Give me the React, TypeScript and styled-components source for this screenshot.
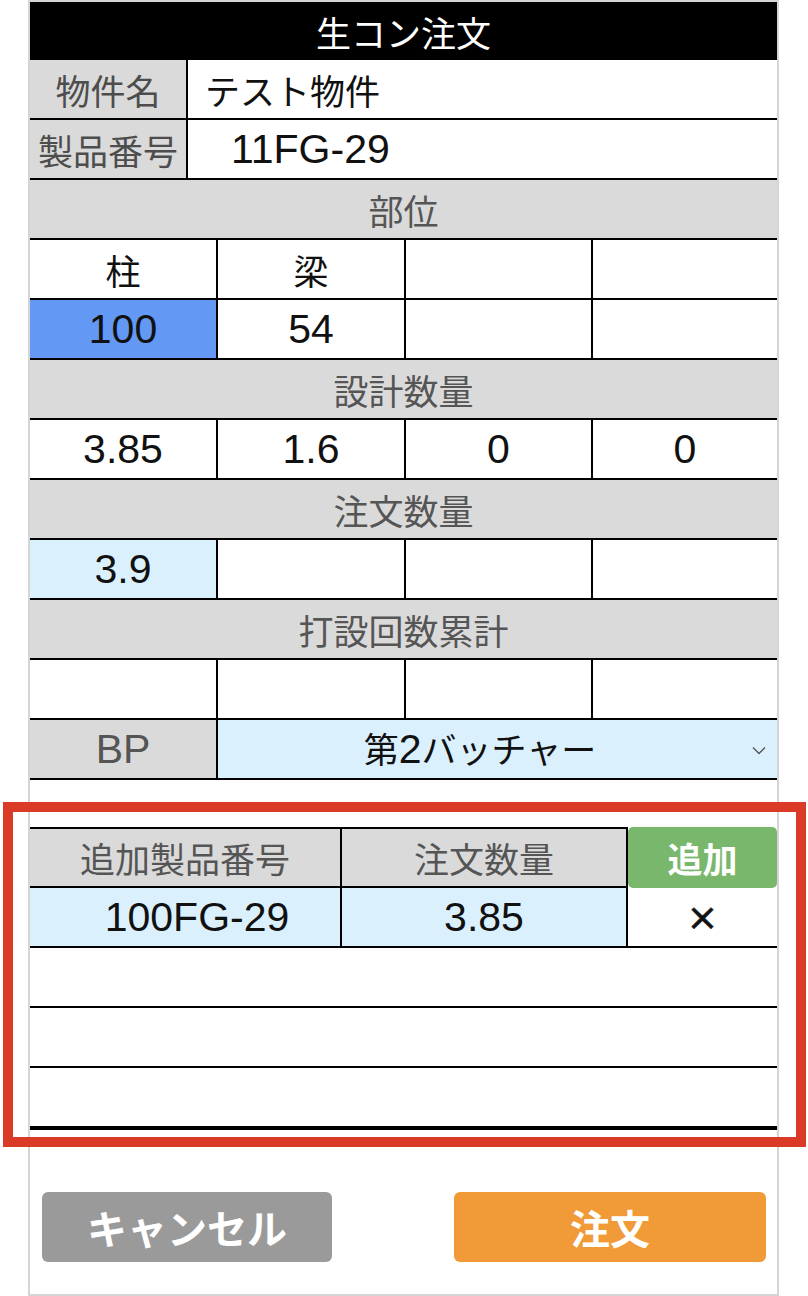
import React from "react";
import styled, { createGlobalStyle } from "styled-components";

const GlobalStyle = createGlobalStyle`
  html, body { margin: 0; padding: 0; background: #fff; }
  body { font-family: "Noto Sans CJK JP", "Noto Sans", sans-serif; }
  * { box-sizing: border-box; }
`;

type Tone = "white" | "blue" | "light" | "gray";
const toneBg: Record<Tone, string> = {
  white: "#ffffff",
  blue: "#6398f5",
  light: "#dbf0fd",
  gray: "#dadada",
};

const latinFont = `"Liberation Sans", "Noto Sans CJK JP", sans-serif`;

const Sheet = styled.div`
  position: relative;
  width: 751px;
  margin-left: 28px;
  border: 2px solid #d5d5d5;
  background: #fff;
  font-size: 35px;
  line-height: 1;
  color: #111;
`;

const Latin = styled.span`
  font-family: ${latinFont};
  font-size: 41px;
`;

const TitleBar = styled.div`
  height: 58px;
  background: #000;
  color: #fff;
  display: flex;
  align-items: center;
  justify-content: center;
`;

const FieldRow = styled.div`
  display: grid;
  grid-template-columns: 156px 1fr;
  column-gap: 2px;
  background: #000;
  border-bottom: 2px solid #000;
  height: 60px;
`;

const FieldLabel = styled.div`
  background: #dadada;
  color: #4d4d4d;
  display: flex;
  align-items: center;
  justify-content: center;
`;

const FieldValue = styled.div<{ $indent: number }>`
  background: #fff;
  display: flex;
  align-items: center;
  padding-left: ${(p) => p.$indent}px;
`;

const SectionHeader = styled.div`
  height: 60px;
  background: #dadada;
  color: #555;
  border-bottom: 2px solid #000;
  display: flex;
  align-items: center;
  justify-content: center;
`;

const QuadRow = styled.div`
  display: grid;
  grid-template-columns: 186px 186px 185px 1fr;
  column-gap: 2px;
  background: #000;
  border-bottom: 2px solid #000;
  height: 60px;
`;

const Cell = styled.div<{ $tone?: Tone; $muted?: boolean; $num?: boolean }>`
  background: ${(p) => toneBg[p.$tone ?? "white"]};
  color: ${(p) => (p.$muted ? "#555" : "#111")};
  font-family: ${(p) => (p.$num ? latinFont : "inherit")};
  font-size: ${(p) => (p.$num ? "41px" : "inherit")};
  display: flex;
  align-items: center;
  justify-content: center;
`;

const BpRow = styled.div`
  display: grid;
  grid-template-columns: 186px 1fr;
  column-gap: 2px;
  background: #000;
  border-bottom: 2px solid #000;
  height: 60px;
`;

const SelectBox = styled.div`
  background: #dbf0fd;
  display: flex;
  align-items: center;
  position: relative;
  padding-right: 35px;
`;

const SelectText = styled.span`
  flex: 1;
  text-align: center;
`;

const Chevron = styled.svg`
  position: absolute;
  right: 11px;
  top: 26px;
`;

const AddSection = styled.div`
  position: relative;
  margin-top: 47px;
`;

const Highlight = styled.div`
  position: absolute;
  top: -25px;
  left: -27px;
  right: -29px;
  bottom: -17px;
  border: 10px solid #d93b27;
  pointer-events: none;
`;

const AddHeaderRow = styled.div`
  display: grid;
  grid-template-columns: 312px 286px 1fr;
  height: 61px;
`;

const AddHeaderCell = styled.div`
  background: #dadada;
  color: #555;
  border-top: 2px solid #000;
  border-bottom: 2px solid #000;
  border-right: 2px solid #000;
  display: flex;
  align-items: center;
  justify-content: center;
`;

const AddButton = styled.button`
  font: inherit;
  font-weight: 700;
  color: #fff;
  background: #79b76c;
  border: none;
  border-radius: 5px;
  padding: 0;
  display: flex;
  align-items: center;
  justify-content: center;
`;

const AddRow = styled.div`
  display: grid;
  grid-template-columns: 312px 286px 1fr;
  height: 60px;
  border-bottom: 2px solid #000;
`;

const AddCell = styled.div<{ $tone?: Tone; $divider?: boolean; $shift?: number }>`
  background: ${(p) => toneBg[p.$tone ?? "white"]};
  border-right: ${(p) => (p.$divider ? "2px solid #000" : "none")};
  font-family: ${latinFont};
  font-size: 41px;
  display: flex;
  align-items: center;
  justify-content: center;
  padding-left: ${(p) => p.$shift ?? 0}px;
`;

const RemoveMark = styled.span`
  font-family: "DejaVu Sans", sans-serif;
  font-size: 38px;
  font-weight: 400;
  -webkit-text-stroke: 0.6px #111;
`;

const EmptyRow = styled.div<{ $last?: boolean }>`
  height: ${(p) => (p.$last ? 62 : 60)}px;
  border-bottom: ${(p) => (p.$last ? 4 : 2)}px solid #000;
`;

const Footer = styled.div`
  display: flex;
  justify-content: space-between;
  padding: 62px 11px 32px 12px;
`;

const ActionButton = styled.button<{ $variant: "cancel" | "order" }>`
  font: inherit;
  font-size: 40px;
  font-weight: 700;
  color: #fff;
  border: none;
  border-radius: 6px;
  height: 70px;
  width: ${(p) => (p.$variant === "cancel" ? 290 : 312)}px;
  background: ${(p) => (p.$variant === "cancel" ? "#9a9a9a" : "#f09b38")};
  display: flex;
  align-items: center;
  justify-content: center;
`;

export default function App() {
  return (
    <>
      <GlobalStyle />
      <Sheet>
        <TitleBar>生コン注文</TitleBar>
        <FieldRow>
          <FieldLabel>物件名</FieldLabel>
          <FieldValue $indent={17}>テスト物件</FieldValue>
        </FieldRow>
        <FieldRow>
          <FieldLabel>製品番号</FieldLabel>
          <FieldValue $indent={43}>
            <Latin>11FG-29</Latin>
          </FieldValue>
        </FieldRow>
        <SectionHeader>部位</SectionHeader>
        <QuadRow>
          <Cell>柱</Cell>
          <Cell>梁</Cell>
          <Cell />
          <Cell />
        </QuadRow>
        <QuadRow>
          <Cell $tone="blue" $num>100</Cell>
          <Cell $num>54</Cell>
          <Cell />
          <Cell />
        </QuadRow>
        <SectionHeader>設計数量</SectionHeader>
        <QuadRow>
          <Cell $num>3.85</Cell>
          <Cell $num>1.6</Cell>
          <Cell $num>0</Cell>
          <Cell $num>0</Cell>
        </QuadRow>
        <SectionHeader>注文数量</SectionHeader>
        <QuadRow>
          <Cell $tone="light" $num>3.9</Cell>
          <Cell />
          <Cell />
          <Cell />
        </QuadRow>
        <SectionHeader>打設回数累計</SectionHeader>
        <QuadRow>
          <Cell />
          <Cell />
          <Cell />
          <Cell />
        </QuadRow>
        <BpRow>
          <Cell $tone="gray" $muted $num>
            BP
          </Cell>
          <SelectBox>
            <SelectText>
              第<Latin>2</Latin>バッチャー
            </SelectText>
            <Chevron width="14" height="9" viewBox="0 0 14 9">
              <path d="M1 1.5 L7 7.5 L13 1.5" fill="none" stroke="#555" strokeWidth="1.4" />
            </Chevron>
          </SelectBox>
        </BpRow>
        <AddSection>
          <AddHeaderRow>
            <AddHeaderCell>追加製品番号</AddHeaderCell>
            <AddHeaderCell>注文数量</AddHeaderCell>
            <AddButton>追加</AddButton>
          </AddHeaderRow>
          <AddRow>
            <AddCell $tone="light" $divider $shift={24}>
              100FG-29
            </AddCell>
            <AddCell $tone="light" $divider>
              3.85
            </AddCell>
            <AddCell>
              <RemoveMark>×</RemoveMark>
            </AddCell>
          </AddRow>
          <EmptyRow />
          <EmptyRow />
          <EmptyRow $last />
          <Highlight />
        </AddSection>
        <Footer>
          <ActionButton $variant="cancel">キャンセル</ActionButton>
          <ActionButton $variant="order">注文</ActionButton>
        </Footer>
      </Sheet>
    </>
  );
}
